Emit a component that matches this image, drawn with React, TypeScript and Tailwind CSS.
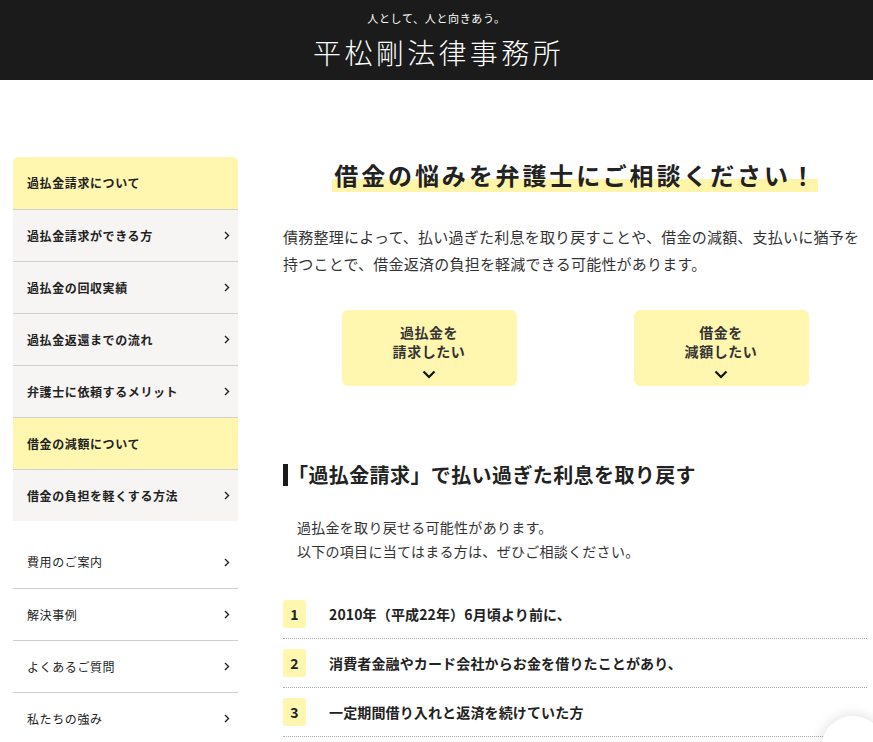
import React from 'react';

const FONT = '"Noto Sans CJK JP", "Noto Sans", sans-serif';

const primaryNav = [
  { label: '過払金請求について', active: true },
  { label: '過払金請求ができる方' },
  { label: '過払金の回収実績' },
  { label: '過払金返還までの流れ' },
  { label: '弁護士に依頼するメリット' },
  { label: '借金の減額について', active: true },
  { label: '借金の負担を軽くする方法' },
];

const secondaryNav = ['費用のご案内', '解決事例', 'よくあるご質問', '私たちの強み'];

const conditions = [
  '2010年（平成22年）6月頃より前に、',
  '消費者金融やカード会社からお金を借りたことがあり、',
  '一定期間借り入れと返済を続けていた方',
];

const ChevronRight = () => (
  <svg width="6" height="9" viewBox="0 0 6 9" fill="none" className="shrink-0">
    <path d="M1 1l3.5 3.5L1 8" stroke="#222" strokeWidth="1.4" />
  </svg>
);

const ChevronDown = () => (
  <svg width="14" height="9" viewBox="0 0 14 9" fill="none">
    <path d="M1.5 1.5L7 7l5.5-5.5" stroke="#111" strokeWidth="2.2" />
  </svg>
);

const Header: React.FC = () => (
  <header className="h-20 bg-[#1b1b1b] flex flex-col items-center text-white">
    <p className="mt-[10px] text-[11px] leading-[16px] tracking-[0.06em]">人として、人と向きあう。</p>
    <h1 className="mt-[8px] text-[28px] leading-[36px] font-light tracking-[0.12em] pl-[4px]">平松剛法律事務所</h1>
  </header>
);

const Sidebar: React.FC = () => (
  <aside className="w-[225px] shrink-0">
    <ul className="rounded-t-[6px] overflow-hidden bg-[#f6f5f4]">
      {primaryNav.map((item, i) => (
        <li
          key={item.label}
          className={`h-[52px] flex items-center justify-between pl-[14px] pr-[8px] ${
            i > 0 ? 'border-t border-[#cfcfcf]' : ''
          } ${item.active ? 'bg-[#fff7b0]' : ''}`}
        >
          <span className="text-[12px] font-bold tracking-[0.05em] text-[#222]">{item.label}</span>
          {!item.active && <ChevronRight />}
        </li>
      ))}
    </ul>
    <ul className="mt-[15px]">
      {secondaryNav.map((label, i) => (
        <li
          key={label}
          className={`h-[52px] flex items-center justify-between pl-[14px] pr-[8px] ${
            i > 0 ? 'border-t border-[#cfcfcf]' : ''
          }`}
        >
          <span className="text-[12px] tracking-[0.05em] text-[#222]">{label}</span>
          <ChevronRight />
        </li>
      ))}
    </ul>
  </aside>
);

const Main: React.FC = () => (
  <main className="w-[584px] shrink-0 text-[#222]">
    <h2 className="text-center text-[24px] leading-[36px] font-bold tracking-[0.12em]">
      <span className="bg-[linear-gradient(transparent_62%,#fff5a8_62%)] pl-[2px]">
        借金の悩みを弁護士にご相談ください！
      </span>
    </h2>

    <p className="mt-[30px] text-[15px] leading-[27px] tracking-[0.015em] text-[#333]">
      債務整理によって、払い過ぎた利息を取り戻すことや、借金の減額、支払いに猶予を持つことで、借金返済の負担を軽減できる可能性があります。
    </p>

    <div className="mt-[33px] grid grid-cols-2">
      {[
        ['過払金を', '請求したい'],
        ['借金を', '減額したい'],
      ].map(([a, b]) => (
        <div key={a} className="flex justify-center">
          <button className="w-[175px] h-[76px] rounded-[6px] bg-[#fff7b0] flex flex-col items-center pt-[13px]">
            <span className="text-[14px] leading-[19px] font-bold tracking-[0.04em] text-[#333]">{a}</span>
            <span className="text-[14px] leading-[19px] font-bold tracking-[0.04em] text-[#333]">{b}</span>
            <span className="mt-[9px] flex">
              <ChevronDown />
            </span>
          </button>
        </div>
      ))}
    </div>

    <h3 className="mt-[74px] flex items-center">
      <span className="w-[5px] h-[22px] bg-[#1b1b1b]" />
      <span className="text-[20px] leading-[30px] font-bold tracking-[0.02em]">「過払金請求」で払い過ぎた利息を取り戻す</span>
    </h3>

    <p className="mt-[25px] pl-[14px] text-[14px] leading-[24px] tracking-[0.02em] text-[#333]">
      過払金を取り戻せる可能性があります。
      <br />
      以下の項目に当てはまる方は、ぜひご相談ください。
    </p>

    <ol className="mt-[27px]">
      {conditions.map((text, i) => (
        <li key={text} className="flex items-center gap-[23px] py-[10px] border-b border-dotted border-[#aaa]">
          <span className="w-[23px] h-[28px] rounded-[3px] bg-[#fff7b0] flex items-center justify-center text-[14px] font-bold">
            {i + 1}
          </span>
          <span className="text-[14px] font-bold tracking-[0.01em]">{text}</span>
        </li>
      ))}
    </ol>
  </main>
);

export default function App() {
  return (
    <div className="min-h-screen bg-white" style={{ fontFamily: FONT }}>
      <Header />
      <div className="flex gap-[45px] pl-[13px] pt-[77px] pb-10">
        <Sidebar />
        <Main />
      </div>
      <div className="fixed right-[-12px] bottom-[-38px] w-[64px] h-[64px] rounded-full bg-white shadow-[0_0_14px_rgba(0,0,0,0.15)]" />
    </div>
  );
}
